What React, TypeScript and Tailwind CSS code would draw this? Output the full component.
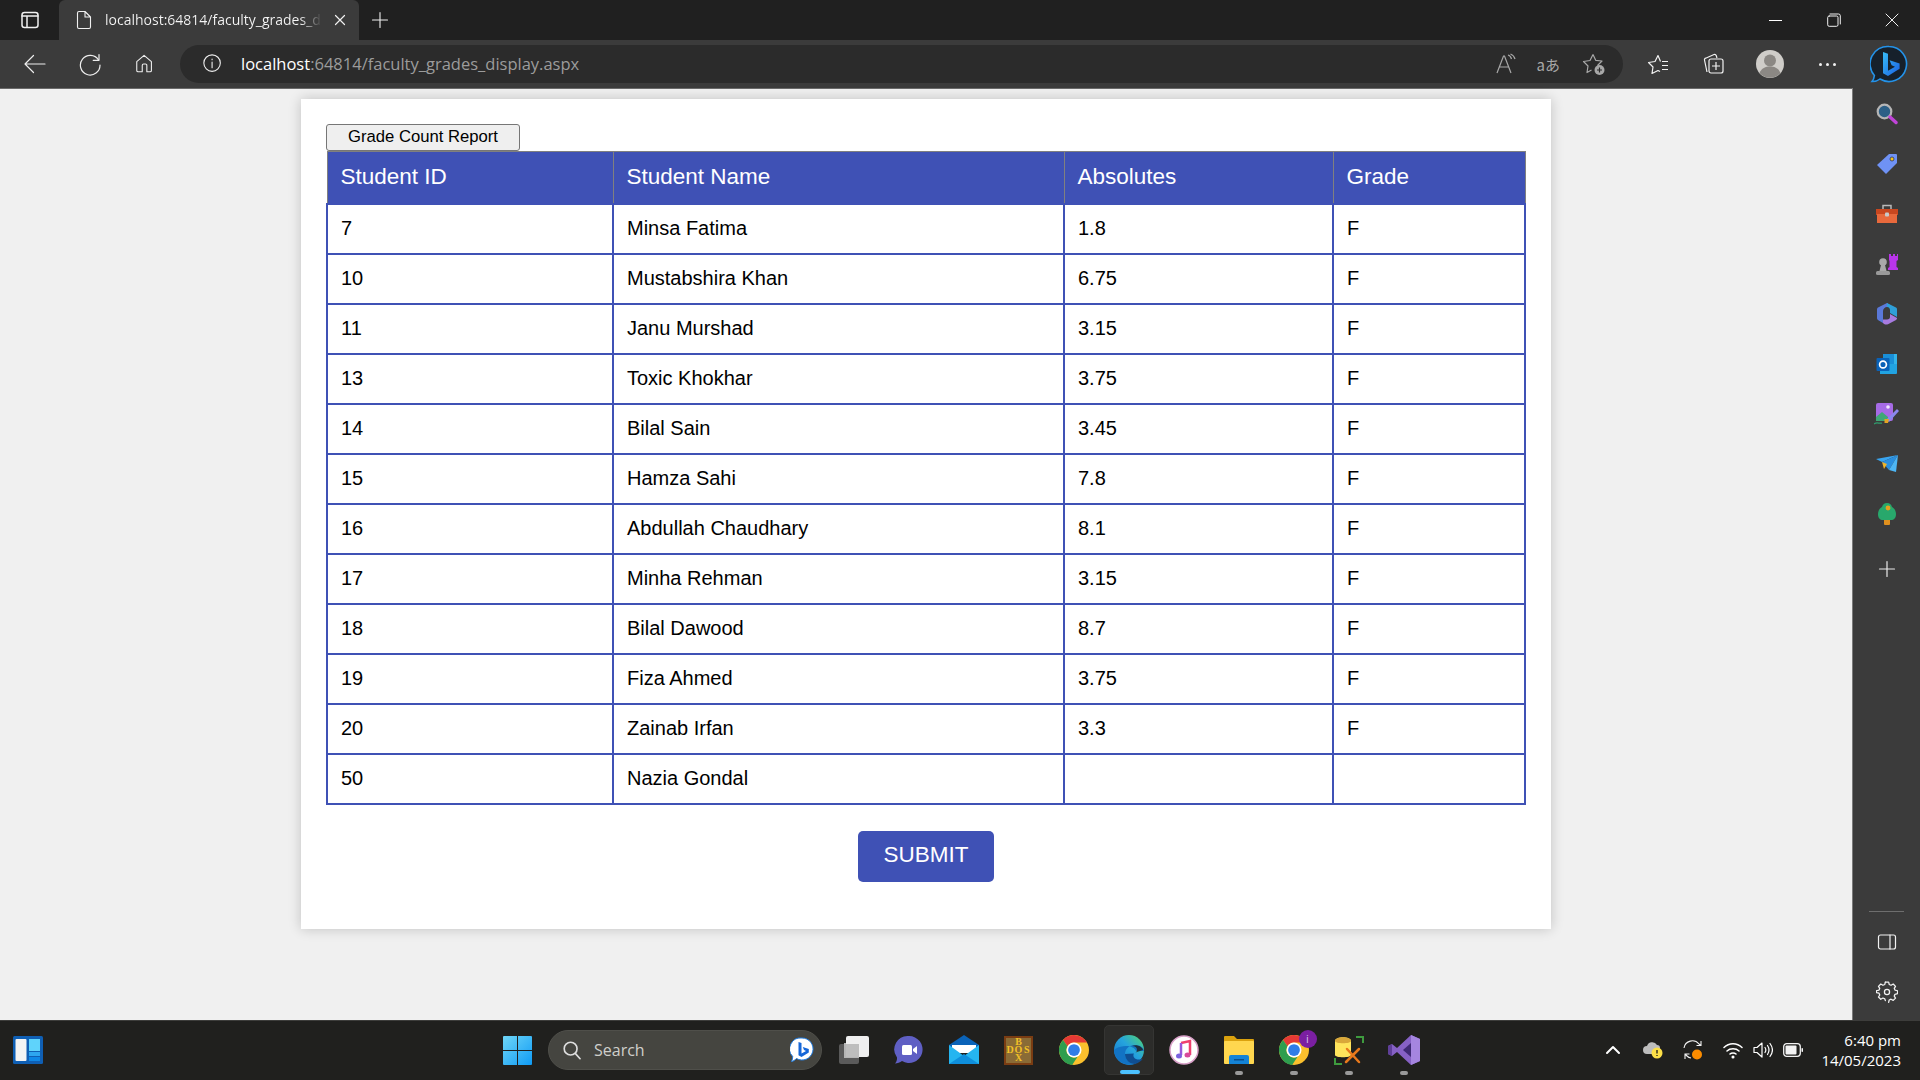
import React from 'react';

const rows = [
  { id: '7', name: 'Minsa Fatima', abs: '1.8', grade: 'F' },
  { id: '10', name: 'Mustabshira Khan', abs: '6.75', grade: 'F' },
  { id: '11', name: 'Janu Murshad', abs: '3.15', grade: 'F' },
  { id: '13', name: 'Toxic Khokhar', abs: '3.75', grade: 'F' },
  { id: '14', name: 'Bilal Sain', abs: '3.45', grade: 'F' },
  { id: '15', name: 'Hamza Sahi', abs: '7.8', grade: 'F' },
  { id: '16', name: 'Abdullah Chaudhary', abs: '8.1', grade: 'F' },
  { id: '17', name: 'Minha Rehman', abs: '3.15', grade: 'F' },
  { id: '18', name: 'Bilal Dawood', abs: '8.7', grade: 'F' },
  { id: '19', name: 'Fiza Ahmed', abs: '3.75', grade: 'F' },
  { id: '20', name: 'Zainab Irfan', abs: '3.3', grade: 'F' },
  { id: '50', name: 'Nazia Gondal', abs: '', grade: '' },
];

const Line: React.FC<{ size: number; className?: string; children: React.ReactNode; vb?: string; sw?: number }> = ({ size, className, children, vb = '0 0 24 24', sw = 1.4 }) => (
  <svg width={size} height={size} viewBox={vb} fill="none" stroke="currentColor" strokeWidth={sw} strokeLinecap="round" strokeLinejoin="round" className={className}>
    {children}
  </svg>
);

const Chrome: React.FC = () => (
  <svg width="30" height="30" viewBox="0 0 24 24">
    <circle cx="12" cy="12" r="12" fill="#fbc02d" />
    <path d="M12 6H22.4A12 12 0 0 0 3.2 3.9L6.8 9A6 6 0 0 1 12 6Z" fill="#e53935" />
    <path d="M3.2 3.9A12 12 0 0 0 10.5 23.9L15 17.2A6 6 0 0 1 6.8 9Z" fill="#2e9e4f" />
    <circle cx="12" cy="12" r="6" fill="#fff" />
    <circle cx="12" cy="12" r="4.7" fill="#2f7de8" />
  </svg>
);

const BingMark: React.FC<{ size: number }> = ({ size }) => (
  <svg width={size} height={size} viewBox="0 0 38 38">
    <defs>
      <linearGradient id="bingB" x1="0" y1="0" x2="1" y2="1">
        <stop offset="0" stopColor="#37bdf8" />
        <stop offset="1" stopColor="#1b5fe0" />
      </linearGradient>
    </defs>
    <path d="M19 1.5a17.5 17.5 0 1 1-9 32.5c-2 1.6-5 2.6-8 2.5 1.4-1.7 2.2-4 2.4-6A17.5 17.5 0 0 1 19 1.5Z" fill="#16202b" stroke="#2492e8" strokeWidth="1.6" />
    <path d="M13 7l5 1.8v17l7-4-3.4-1.6-2-5 10 3.4v5.2L18 31l-5-2.8Z" fill="url(#bingB)" />
  </svg>
);

const Sidebar: React.FC = () => (
  <aside className="w-[68px] shrink-0 bg-[#3b3b3b] border-l border-[#7a7a7a] flex flex-col items-center pt-[1px]">
    <div className="h-[50px] flex items-center justify-center">
      <svg width="22" height="22" viewBox="0 0 22 22">
        <circle cx="8.5" cy="8.5" r="6.8" fill="#2c5f86" stroke="#b5b5b5" strokeWidth="2.2" />
        <path d="M14 14l6 5.5" stroke="#c044d8" strokeWidth="3.4" strokeLinecap="round" />
      </svg>
    </div>
    <div className="h-[50px] flex items-center justify-center">
      <svg width="22" height="22" viewBox="0 0 22 22">
        <path d="M13 1h7a1 1 0 0 1 1 1v8L10 21 1 12Z" fill="#6f92f5" />
        <circle cx="16" cy="6" r="2" fill="#f5c518" stroke="#28356b" strokeWidth="0.8" />
      </svg>
    </div>
    <div className="h-[50px] flex items-center justify-center">
      <svg width="24" height="22" viewBox="0 0 24 22">
        <path d="M8 6V2.5h8V6" fill="none" stroke="#b9b9b9" strokeWidth="1.5" />
        <rect x="1" y="6" width="22" height="6" fill="#c9471f" />
        <rect x="2" y="11" width="20" height="9" fill="#e8693c" />
        <rect x="10" y="9.5" width="4" height="4" rx="1" fill="#c9c9c9" />
      </svg>
    </div>
    <div className="h-[50px] flex items-center justify-center">
      <svg width="24" height="24" viewBox="0 0 24 24">
        <path d="M14 2h2v2h2V2h2v2h2V2h1v6l-1.5 1v6l1.5 1v2H13v-2l1.5-1V9L14 8Z" fill="#b935ea" />
        <circle cx="8" cy="10" r="3.8" fill="#a9a9a9" />
        <path d="M6 13h4l1.5 6h-7Z" fill="#a9a9a9" />
        <rect x="1" y="19" width="14" height="4" rx="1.5" fill="#999" />
      </svg>
    </div>
    <div className="h-[50px] flex items-center justify-center">
      <svg width="22" height="24" viewBox="0 0 22 24">
        <path d="M11 1 2 5.5C1 6.2 1 7 1 8v8c0 1 .5 1.8 1.3 2.2L7 21V9c0-2 2-4 4-4h3l1-1Z" fill="#5a78d8" />
        <path d="M11 1l9 4.5c1 .6 1 1.5 1 2.5v7l-7-4V8c0-1.5-1-3-3-3Z" fill="#2f9fd8" />
        <path d="M7 21c1.5 1.5 3 2 5 1.2l8-4.2c.7-.5 1-1 1-2l-7-4v3c0 1.5-1 2.4-3 2.4H7Z" fill="#a77be0" />
      </svg>
    </div>
    <div className="h-[50px] flex items-center justify-center">
      <svg width="22" height="22" viewBox="0 0 22 22">
        <path d="M7 1h11v10H7Z" fill="#1a8fd8" />
        <path d="M18 1h3v10h-3Z" fill="#33b4ea" />
        <path d="M4 11h17v9a1 1 0 0 1-1 1H4Z" fill="#21a3e2" />
        <rect x="0.5" y="5" width="13" height="13" rx="1" fill="#0a62b8" />
        <circle cx="7" cy="11.5" r="3.4" fill="none" stroke="#fff" strokeWidth="1.7" />
      </svg>
    </div>
    <div className="h-[50px] flex items-center justify-center">
      <svg width="26" height="24" viewBox="0 0 26 24">
        <rect x="2" y="1" width="17" height="18" rx="2" fill="#a66be6" />
        <path d="M2 15l6-5 6 5v4H2Z" fill="#3fa876" />
        <circle cx="14" cy="5" r="1.8" fill="#f1e6ff" />
        <path d="M12 18 23 7l2 2-10 11Z" fill="#8a87ee" />
        <path d="M10.5 17h4.5l-1 4h-3.5Z" fill="#e5a423" />
        <path d="M0 22c3-2.5 5 0 8-1" fill="none" stroke="#2f9e6e" strokeWidth="1.2" />
      </svg>
    </div>
    <div className="h-[50px] flex items-center justify-center">
      <svg width="22" height="18" viewBox="0 0 22 18">
        <path d="M0 4 22 0 6 7Z" fill="#39a5f0" />
        <path d="M6 7 22 0 13 15Z" fill="#2a8fe0" />
        <path d="M6 7l2 7 3-5Z" fill="#f0b429" />
        <path d="M13 15 22 0 20 17Z" fill="#4db6f5" />
      </svg>
    </div>
    <div className="h-[50px] flex items-center justify-center">
      <svg width="20" height="24" viewBox="0 0 20 24">
        <rect x="7" y="17" width="6" height="6" rx="1" fill="#e0901e" />
        <path d="M10 1c3 0 4.5 2 5 4 2 1 4 3.5 4 7 0 4-2 6-5 6H6c-3 0-5-2-5-6 0-3.5 2-6 4-7 .5-2 2-4 5-4Z" fill="#28a86c" />
        <circle cx="11" cy="6" r="2.4" fill="#e6a11f" />
      </svg>
    </div>
    <Line size={18} className="mt-[21px] text-[#eaeaea]" vb="0 0 18 18" sw={1.2}>
      <path d="M9 1.5v15M1.5 9h15" />
    </Line>
    <div className="mt-auto w-[35px] h-px bg-[#6e6e6e] mb-[20px]" />
    <Line size={20} className="text-[#f2f2f2]" vb="0 0 20 20" sw={1.2}>
      <rect x="1.5" y="3" width="17" height="14" rx="2" />
      <path d="M13 3v14" />
    </Line>
    <Line size={22} className="text-[#f2f2f2] mt-[29px] mb-[17px]">
      <circle cx="12" cy="12" r="2.8" />
      <path d="M10.2 2.5h3.6l.6 2.7 2 .9 2.4-1.4 2.5 2.6-1.4 2.3.8 2 2.8.7v3.4l-2.8.7-.8 2 1.4 2.3-2.5 2.6-2.4-1.4-2 .9-.6 2.7" transform="translate(0 -1.2) scale(1 .96)" />
      <path d="M10.2 2.5l-.6 2.7-2 .9-2.4-1.4-2.5 2.6 1.4 2.3-.8 2-2.8.7v0M.5 12.3v2.1l2.8.7.8 2-1.4 2.3 2.5 2.6 2.4-1.4 2 .9.6 2" transform="translate(0 -1.2) scale(1 .96)" />
    </Line>
  </aside>
);

const TaskIcon: React.FC<{ active?: boolean; running?: boolean; children: React.ReactNode }> = ({ active, running, children }) => (
  <div className={`relative w-[50px] h-[50px] mx-[2.5px] flex items-center justify-center rounded-[5px] ${active ? 'bg-[#2c2c2a] border border-[#353533]' : ''}`}>
    {children}
    {active && <span className="absolute bottom-[0px] left-[15px] w-[20px] h-[4px] rounded-full bg-[#4cc2ff]" />}
    {running && <span className="absolute bottom-[0px] left-[21px] w-[8px] h-[4px] rounded-full bg-[#9a9a9a]" />}
  </div>
);

const Taskbar: React.FC = () => (
  <footer className="h-[60px] shrink-0 bg-[#20201e] border-t border-[#3d3d3b] pb-[1px] flex items-center relative font-['Open_Sans']">
    <svg width="30" height="28" viewBox="0 0 30 28" className="ml-[13px]">
      <rect width="30" height="28" rx="1.5" fill="#0f5fb4" />
      <rect x="2.5" y="3" width="11" height="22" rx="1" fill="#f4f4f4" />
      <rect x="16" y="3" width="11" height="12" fill="#5fd3fb" />
      <rect x="16" y="16" width="11" height="4" fill="#2ea6f0" />
      <rect x="16" y="21" width="11" height="4" fill="#0f87e6" />
    </svg>
    <svg width="29" height="29" viewBox="0 0 29 29" className="ml-[460px]">
      <defs>
        <linearGradient id="winG" x1="0" y1="0" x2="1" y2="1">
          <stop offset="0" stopColor="#6fd6f7" />
          <stop offset="1" stopColor="#0f9bf5" />
        </linearGradient>
      </defs>
      <path d="M0 1a1 1 0 0 1 1-1h13v14H0ZM15 0h13a1 1 0 0 1 1 1v13H15ZM0 15h14v14H1a1 1 0 0 1-1-1ZM15 15h14v13a1 1 0 0 1-1 1H15Z" fill="url(#winG)" />
    </svg>
    <div className="ml-[16px] w-[274px] h-[40px] rounded-full bg-[#454540] border border-[#4f4f4a] flex items-center pl-[12px] pr-[7px]">
      <Line size={22} className="text-[#dedede]" sw={1.8}>
        <circle cx="10.5" cy="10.5" r="7" />
        <path d="M15.8 16l5 5.5" />
      </Line>
      <span className="ml-[11px] text-[#cfcfcb] text-[16px]">Search</span>
      <svg width="24" height="26" viewBox="0 0 24 26" className="ml-auto">
        <path d="M12 1a11 11 0 1 1-5.5 20.5C5 23 3 24.5 1.5 24.5c.8-1.2 1.2-3 1.2-5A11 11 0 0 1 12 1Z" fill="#fff" stroke="#1f7be0" strokeWidth="1" />
        <path d="M8.5 5l3 1v10.500l4.500-2.500-2-1-1.200-3 6 2v3.500L11.500 20l-3-1.800Z" fill="#1667d8" />
      </svg>
    </div>
    <div className="ml-[4px] flex items-center">
      <TaskIcon>
        <svg width="30" height="30" viewBox="0 0 30 30">
          <rect x="0" y="9" width="20" height="20" rx="2" fill="#5a5a5a" />
          <rect x="5" y="8" width="15" height="15" fill="#b5b5b5" />
          <rect x="7" y="1" width="23" height="21" rx="2" fill="#efefef" />
          <rect x="7" y="9" width="13" height="13" fill="#bdbdbd" />
        </svg>
      </TaskIcon>
      <TaskIcon>
        <svg width="30" height="30" viewBox="0 0 30 30">
          <path d="M15 1a13.500 13.500 0 1 1-7 25c-2 1.500-4.500 2.500-7 2.500 1.300-1.500 2.200-3.500 2-6A13.500 13.500 0 0 1 15 1Z" fill="#5f5fc4" />
          <rect x="8" y="10" width="10" height="10" rx="1.500" fill="#fff" />
          <path d="M19 14l4-3v8l-4-3Z" fill="#fff" />
        </svg>
      </TaskIcon>
      <TaskIcon>
        <svg width="30" height="30" viewBox="0 0 30 30">
          <path d="M0 10 15 0l15 10v3H0Z" fill="#0a63b8" />
          <path d="M3 10h24v8H3Z" fill="#fff" />
          <path d="M0 10l15 11 15-11v19H0Z" fill="#25b5f0" />
          <path d="M0 29 15 19l15 10Z" fill="#0f8fdc" />
        </svg>
      </TaskIcon>
      <TaskIcon>
        <div className="w-[29px] h-[29px] bg-[#8a6b36] border-2 border-[#7a3c12] grid grid-cols-3 grid-rows-3 text-[#f2c027] text-[10px] leading-[8px] font-bold font-['Liberation_Serif'] text-center items-center">
          <span />
          <span>B</span>
          <span />
          <span>D</span>
          <span>O</span>
          <span>S</span>
          <span />
          <span>X</span>
          <span />
        </div>
      </TaskIcon>
      <TaskIcon>
        <Chrome />
      </TaskIcon>
      <TaskIcon active>
        <svg width="30" height="30" viewBox="0 0 30 30">
          <defs>
            <linearGradient id="edgeG" x1="0" y1="1" x2="1" y2="0">
              <stop offset="0" stopColor="#1472c9" />
              <stop offset="0.55" stopColor="#25a3dd" />
              <stop offset="1" stopColor="#54d86c" />
            </linearGradient>
          </defs>
          <circle cx="15" cy="15" r="15" fill="url(#edgeG)" />
          <path d="M30 16c0-3-4-6-9-6-6 0-10 4-10 9 0 5 4 10 10 10-10 3-21-4-21-14 0 0 4-4 12-4 5 0 9 2 10 5Z" fill="#1273c4" />
          <path d="M11 19c0 5 4 10 10 10 3-.8 6-2.500 8-5.500-2 1-5 1.500-7 .500-3-1.500-3-4-2-5.500l-9 .500Z" fill="#0f4e92" />
          <path d="M18 11c3 0 5 1.500 5 4 0 1-.5 2-1.500 2.500L29 15c-.5-3-6-6-11-4Z" fill="#20201e" opacity="0.8" />
        </svg>
      </TaskIcon>
      <TaskIcon>
        <svg width="30" height="30" viewBox="0 0 30 30">
          <circle cx="15" cy="15" r="14" fill="#fff" stroke="#d8a0c8" strokeWidth="1.500" />
          <path d="M12 8l9-2v14" fill="none" stroke="#ef3f6e" strokeWidth="2.500" />
          <path d="M12 8v12" fill="none" stroke="#9a57dc" strokeWidth="2.500" />
          <ellipse cx="10" cy="21" rx="3" ry="2.500" fill="#7b62e0" />
          <ellipse cx="18.500" cy="20" rx="3" ry="2.500" fill="#d74a9c" />
        </svg>
      </TaskIcon>
      <TaskIcon running>
        <svg width="30" height="30" viewBox="0 0 30 30">
          <path d="M0 2a1 1 0 0 1 1-1h9l3 3h16a1 1 0 0 1 1 1v3H0Z" fill="#dba20e" />
          <rect x="0" y="6" width="30" height="23" rx="1" fill="#ffd74f" />
          <path d="M5 22a2 2 0 0 1 2-2h16a2 2 0 0 1 2 2v7H5Z" fill="#1483d6" />
          <rect x="10" y="24" width="10" height="1.500" fill="#0a4f8c" />
        </svg>
      </TaskIcon>
      <TaskIcon running>
        <Chrome />
        <span className="absolute top-[5px] right-[2px] w-[18px] h-[18px] rounded-full bg-[#7b1fa2] text-[#d9c2e6] text-[11px] flex items-center justify-center">i</span>
      </TaskIcon>
      <TaskIcon running>
        <svg width="30" height="30" viewBox="0 0 30 30">
          <path d="M1 6c0-5 16-5 16 0v14c0 3-16 3-16 0Z" fill="#ffe45c" />
          <path d="M1 6c0-5 16-5 16 0 0 3-16 3-16 0Z" fill="#d9a73a" />
          <path d="M22 2h7v6M1 23v6h7" fill="none" stroke="#3e9b3e" strokeWidth="2" />
          <path d="M12 27 25 14M13 14l12 13" stroke="#e8791c" strokeWidth="2.500" strokeLinecap="round" />
        </svg>
      </TaskIcon>
      <TaskIcon running>
        <svg width="32" height="32" viewBox="0 0 32 32">
          <path d="M23 1l9 4v22l-9 4L9 18l-5 4-4-2V12l4-2 5 4Z" fill="#8661c5" />
          <path d="M23 9v14l-8-7Z" fill="#3f2a75" />
          <path d="M0 12l4-2v12l-4-2Z" fill="#5f3f99" />
          <path d="M23 1l9 4v22l-9 4Z" fill="#a585e0" />
        </svg>
      </TaskIcon>
    </div>
    <Line size={16} className="ml-[174px] text-white" vb="0 0 16 16" sw={2}>
      <path d="M2 11l6-6 6 6" />
    </Line>
    <svg width="20" height="18" viewBox="0 0 20 18" className="ml-[22px]">
      <path d="M4 13a4 4 0 0 1 0-8 5.500 5.500 0 0 1 10-1c2 0 3 1 3 3v6Z" fill="#bdbdbd" />
      <circle cx="14" cy="12" r="5.500" fill="#fde047" />
      <path d="M14 9v3.500M14 14v1" stroke="#1a1a1a" strokeWidth="1.300" />
    </svg>
    <svg width="20" height="22" viewBox="0 0 20 22" className="ml-[20px]">
      <path d="M1 9a8.500 8.500 0 0 1 15-4l2 1.500M18 2v4.500h-4.500M2 15l2 2a7 7 0 0 0 4 2M2 20v-5h4.500" fill="none" stroke="#f2f2f2" strokeWidth="1.100" />
      <circle cx="14" cy="15.500" r="5" fill="#fb8c00" />
    </svg>
    <Line size={20} className="ml-[20px] text-white" vb="0 0 20 20" sw={1.500}>
      <path d="M1 7.500c5-5 13-5 18 0M4 11c3-3 9-3 12 0M7 14c1.500-1.500 4.500-1.500 6 0" />
      <circle cx="10" cy="17" r="0.800" fill="currentColor" />
    </Line>
    <Line size={20} className="ml-[10px] text-white" vb="0 0 20 20" sw={1.200}>
      <path d="M1 7.500v5h3l5 4.500V3L4 7.500Z" />
      <path d="M12 7.500c1 1.500 1 3.500 0 5M14.500 5.500c2 3 2 6 0 9M17 3.500c3 4 3 9 0 13" />
    </Line>
    <svg width="20" height="14" viewBox="0 0 20 14" className="ml-[10px]">
      <rect x="0.700" y="0.700" width="16.600" height="12.600" rx="3" fill="none" stroke="#f2f2f2" strokeWidth="1.300" />
      <rect x="2.500" y="2.500" width="11" height="9" rx="1" fill="#f2f2f2" />
      <rect x="18.500" y="5" width="1.500" height="4" rx="0.700" fill="#f2f2f2" />
    </svg>
    <div className="ml-auto mr-[19px] text-right text-white text-[15px] leading-[20px]">
      <div>6:40 pm</div>
      <div>14/05/2023</div>
    </div>
  </footer>
);

const App: React.FC = () => (
  <div className="w-[1920px] h-[1080px] flex flex-col overflow-hidden font-['Liberation_Sans',Arial,sans-serif]">
    {/* title bar */}
    <div className="h-[40px] shrink-0 bg-[#202020] flex items-center text-white font-['Open_Sans',sans-serif]">
      <Line size={20} className="ml-[20px] text-[#f0f0f0]" vb="0 0 20 20" sw={1.500}>
        <rect x="2" y="2.500" width="16" height="15" rx="2.500" />
        <path d="M2 6h16M7 6v11" />
      </Line>
      <div className="ml-[19px] w-[300px] h-[40px] bg-[#3b3b3b] rounded-t-[6px] flex items-center pl-[15px]">
        <Line size={20} className="text-[#f0f0f0]" vb="0 0 20 20" sw={1.100}>
          <path d="M3.500 3a1.500 1.500 0 0 1 1.500-1.500h6l5.500 5.500v10a1.500 1.500 0 0 1-1.500 1.500H5A1.500 1.500 0 0 1 3.500 17ZM11 1.500V7h5.500" />
        </Line>
        <span className="ml-[11px] mb-[2px] w-[217px] overflow-hidden whitespace-nowrap text-[14px] bg-[linear-gradient(90deg,#f5f5f5_90%,transparent)] bg-clip-text text-transparent">
          localhost:64814/faculty_grades_display.aspx
        </span>
        <Line size={12} className="ml-[12px] text-[#f0f0f0]" vb="0 0 12 12" sw={1.200}>
          <path d="M1.500 1.500l9 9M10.500 1.500l-9 9" />
        </Line>
      </div>
      <Line size={18} className="ml-[12px] text-[#f0f0f0]" vb="0 0 18 18" sw={1.100}>
        <path d="M9 1.500v15M1.500 9h15" />
      </Line>
      <div className="ml-auto flex items-center">
        <span className="w-[13px] h-px bg-white mr-[45px]" />
        <Line size={14} className="text-[#f0f0f0] mr-[44px]" vb="0 0 14 14" sw={1}>
          <rect x="0.700" y="3" width="10.300" height="10.300" rx="1.500" />
          <path d="M3 1h8.500A1.800 1.800 0 0 1 13.300 2.800V11" />
        </Line>
        <Line size={14} className="text-[#f0f0f0] mr-[21px]" vb="0 0 14 14" sw={1}>
          <path d="M1 1l12 12M13 1 1 13" />
        </Line>
      </div>
    </div>

    {/* toolbar */}
    <div className="h-[48px] shrink-0 bg-[#3b3b3b] flex items-center text-[#eeeeee] font-['Open_Sans',sans-serif]">
      <Line size={24} className="ml-[23px]" sw={1.200}>
        <path d="M22 12H2M10.500 3.500 2 12l8.500 8.500" />
      </Line>
      <Line size={24} className="ml-[31px]" sw={1.200}>
        <path d="M20.500 8A9.800 9.800 0 1 0 22 13" />
        <path d="M21 2.500V8.300h-5.800" />
      </Line>
      <Line size={22} className="ml-[32px]" sw={1.200}>
        <path d="M3 9.500 11 2.500l8 7V19a1.500 1.500 0 0 1-1.500 1.500h-3.500V13.500a1.500 1.500 0 0 0-1.500-1.500h-2A1.500 1.500 0 0 0 9 13.500v7H4.500A1.500 1.500 0 0 1 3 19Z" />
      </Line>
      <div className="ml-[24px] w-[1443px] h-[38px] rounded-full bg-[#2b2b2b] flex items-center pl-[22px]">
        <Line size={22} sw={1.200}>
          <circle cx="11" cy="11" r="9" />
          <path d="M11 10v6M11 6.500v.8" />
        </Line>
        <span className="ml-[17px] text-[16.500px] text-[#9c9c9c]">
          <span className="text-white">localhost</span>:64814/faculty_grades_display.aspx
        </span>
        <svg width="22" height="22" viewBox="0 0 22 22" className="ml-auto text-[#a8a8a8]" fill="none" stroke="currentColor" strokeWidth="1.200">
          <path d="M2 20 8.500 3h1L16 20M4.500 14h9" />
          <path d="M13 2c2 .5 3 2 3.500 4M15.500 1c2.500 1 4 3 4.500 5" />
        </svg>
        <span className="ml-[20px] text-[#a8a8a8] text-[15px] leading-none font-['Noto_Sans_CJK_JP',sans-serif]">aあ</span>
        <svg width="24" height="24" viewBox="0 0 24 24" className="ml-[22px] mr-[17px]" fill="none" stroke="#a8a8a8" strokeWidth="1.200" strokeLinejoin="round">
          <path d="M11 2.500 13.700 8.300 20 9 15.500 13.500M9.500 18 5 20.500 6 14 1.500 9.500 8 8.500 11 2.500" />
          <circle cx="17.500" cy="18" r="5" fill="#a8a8a8" stroke="none" />
          <path d="M17.500 15.500v5M15 18h5" stroke="#2b2b2b" strokeWidth="1.200" />
        </svg>
      </div>
      <svg width="22" height="22" viewBox="0 0 22 22" className="ml-[24px]" fill="none" stroke="#f2f2f2" strokeWidth="1.200" strokeLinejoin="round">
        <path d="M13.500 8.500 11 2.500 8 8.500 1.500 9.500 6 14 5 20.500 11 17.500 13 18.500" />
        <path d="M15 8.500h6M15 12.500h6M15 16.500h6" />
      </svg>
      <svg width="22" height="22" viewBox="0 0 22 22" className="ml-[33px]" fill="none" stroke="#f2f2f2" strokeWidth="1.200">
        <path d="M5 19 2.500 7a1.500 1.500 0 0 1 1.200-1.800L12 1.500c1-.3 1.800 0 2.200 1l.8 2.500" />
        <rect x="7" y="6" width="14" height="14" rx="2" />
        <path d="M14 9v8M10 13h8" />
      </svg>
      <svg width="28" height="28" viewBox="0 0 28 28" className="ml-[32px]">
        <circle cx="14" cy="14" r="14" fill="#cfcdc9" />
        <circle cx="14" cy="10.500" r="6" fill="#8b8884" />
        <path d="M3.500 23c2-5 6-6.500 10.500-6.500S22.500 18 24.500 23a14 14 0 0 1-21 0Z" fill="#8b8884" />
      </svg>
      <div className="ml-[35px] flex gap-[4px]">
        <span className="w-[3px] h-[3px] rounded-full bg-[#f2f2f2]" />
        <span className="w-[3px] h-[3px] rounded-full bg-[#f2f2f2]" />
        <span className="w-[3px] h-[3px] rounded-full bg-[#f2f2f2]" />
      </div>
      <div className="ml-[34px]">
        <BingMark size={38} />
      </div>
    </div>

    {/* page + edge sidebar */}
    <div className="flex-1 min-h-0 flex">
      <main className="flex-1 bg-[#f0f0f0] pt-[10px] border-t border-[#6a6a6a]">
        <div className="w-[1250px] h-[830px] mx-auto bg-white shadow-[0_0_12px_rgba(0,0,0,0.2)] pt-[25px] px-[25px]">
          <button className="block w-[194px] h-[27px] bg-[#efefef] border border-[#767676] rounded-[3px] text-[16.67px] leading-none text-black">
            Grade Count Report
          </button>
          <table className="w-[1198px] table-fixed border-collapse text-[20px] text-black">
            <colgroup>
              <col className="w-[286px]" />
              <col className="w-[451px]" />
              <col className="w-[269px]" />
              <col className="w-[192px]" />
            </colgroup>
            <thead>
              <tr className="h-[52px] bg-[#3f51b5] text-white text-[22.5px] text-left">
                <th className="font-normal border border-[#808080] pl-[13px]">Student ID</th>
                <th className="font-normal border border-[#808080] pl-[13px]">Student Name</th>
                <th className="font-normal border border-[#808080] pl-[13px]">Absolutes</th>
                <th className="font-normal border border-[#808080] pl-[13px]">Grade</th>
              </tr>
            </thead>
            <tbody>
              {rows.map(r => (
                <tr key={r.id} className="h-[50px]">
                  <td className="border-2 border-[#3f51b5] pl-[13px] pb-[2px]">{r.id}</td>
                  <td className="border-2 border-[#3f51b5] pl-[13px] pb-[2px]">{r.name}</td>
                  <td className="border-2 border-[#3f51b5] pl-[13px] pb-[2px]">{r.abs}</td>
                  <td className="border-2 border-[#3f51b5] pl-[13px] pb-[2px]">{r.grade}</td>
                </tr>
              ))}
            </tbody>
          </table>
          <button className="block mx-auto mt-[26px] w-[136px] h-[51px] bg-[#3f51b5] rounded-[5px] pb-[2px] text-white text-[22.5px]">
            SUBMIT
          </button>
        </div>
      </main>
      <Sidebar />
    </div>

    <Taskbar />
  </div>
);

export default App;
